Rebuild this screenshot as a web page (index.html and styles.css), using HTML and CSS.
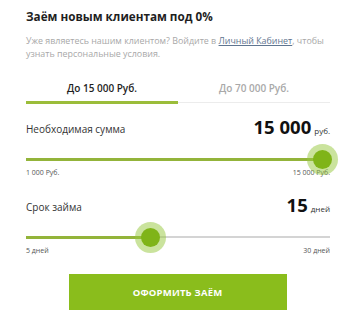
FILE: index.html
```html
<!DOCTYPE html>
<html lang="ru">
<head>
<meta charset="utf-8">
<link rel="stylesheet" href="styles.css">
</head>
<body>
<div class="card">
  <h1 class="title">Заём новым клиентам под 0%</h1>
  <p class="lead"><span>Уже являетесь нашим клиентом? Войдите в</span> <a class="link" href="#">Личный Кабинет</a><span>, чтобы</span> <span>узнать персональные условия.</span></p>
  <div class="tabs">
    <div class="tab tab-active">До 15 000 Руб.</div>
    <div class="tab">До 70 000 Руб.</div>
  </div>
  <div class="field">
    <div class="field-head">
      <span class="field-label">Необходимая сумма</span>
      <span class="field-value"><b class="num">15 000</b><span class="unit">руб.</span></span>
    </div>
    <div class="slider">
      <div class="track"></div>
      <div class="fill" style="width: 97.4%"></div>
      <div class="thumb" style="left: 97.4%"></div>
    </div>
    <div class="range">
      <span>1 000 Руб.</span>
      <span>15 000 Руб.</span>
    </div>
  </div>
  <div class="field field-2">
    <div class="field-head">
      <span class="field-label">Срок займа</span>
      <span class="field-value"><b class="num">15</b><span class="unit">дней</span></span>
    </div>
    <div class="slider">
      <div class="track"></div>
      <div class="fill" style="width: 40.8%"></div>
      <div class="thumb" style="left: 40.8%"></div>
    </div>
    <div class="range">
      <span>5 дней</span>
      <span>30 дней</span>
    </div>
  </div>
  <div class="actions">
    <button class="btn">ОФОРМИТЬ ЗАЁМ</button>
  </div>
</div>
</body>
</html>
```
FILE: styles.css
```css
html, body {
  margin: 0;
  padding: 0;
  background: #ffffff;
}
.card {
  width: 304px;
  padding: 7px 26px 0 26px;
  font-family: "Open Sans", "DejaVu Sans", sans-serif;
  color: #222;
}
.title {
  margin: 0;
  font-size: 11.7px;
  line-height: 18px;
  font-weight: 700;
  color: #1f1f1f;
}
.lead {
  margin: 9px 0 0 0;
  font-size: 8.9px;
  line-height: 13px;
  color: #a8a8a8;
}
.link {
  color: #5f7590;
  text-decoration: underline;
}
.tabs {
  display: flex;
  margin-top: 21px;
}
.tab {
  flex: 1;
  text-align: center;
  font-size: 10px;
  line-height: 14px;
  font-weight: 600;
  color: #a9a9a9;
  padding-bottom: 7px;
  border-bottom: 1px solid #ececec;
  margin-bottom: 1px;
}
.tab-active {
  color: #1f1f1f;
  border-bottom: 3px solid #9bbd3a;
  margin-bottom: 0;
  padding-bottom: 6px;
}
.field {
  margin-top: 13px;
}
.field-2 {
  margin-top: 17px;
}
.field-head {
  display: flex;
  justify-content: space-between;
  align-items: center;
  height: 24px;
}
.field-label {
  font-size: 10px;
  line-height: 24px;
  color: #333;
}
.field-value {
  line-height: 24px;
}
.num {
  font-size: 18.5px;
  font-weight: 700;
  color: #111;
}
.unit {
  font-size: 8px;
  color: #333;
  margin-left: 3px;
}
.slider {
  position: relative;
  height: 28px;
}
.track {
  position: absolute;
  left: 0;
  right: 0;
  top: 17px;
  height: 2px;
  background: #d4d4d4;
}
.fill {
  position: absolute;
  left: 0;
  top: 16.5px;
  height: 3px;
  background: #93b43a;
}
.thumb {
  position: absolute;
  top: 18px;
  width: 19px;
  height: 19px;
  margin: -9.5px 0 0 -9.5px;
  border-radius: 50%;
  background: #7fb418;
  box-shadow: 0 0 0 6px rgba(150, 200, 60, 0.5);
}
.range {
  display: flex;
  justify-content: space-between;
  font-size: 7px;
  line-height: 10px;
  color: #555;
  margin-top: -1px;
}
.actions {
  display: flex;
  justify-content: center;
  margin-top: 18px;
  padding-right: 1px;
}
.btn {
  width: 218px;
  height: 36px;
  border: 0;
  background: #8abd1c;
  color: #fff;
  font-family: "Open Sans", "DejaVu Sans", sans-serif;
  font-size: 9.5px;
  font-weight: 700;
  letter-spacing: 0.2px;
}
```
